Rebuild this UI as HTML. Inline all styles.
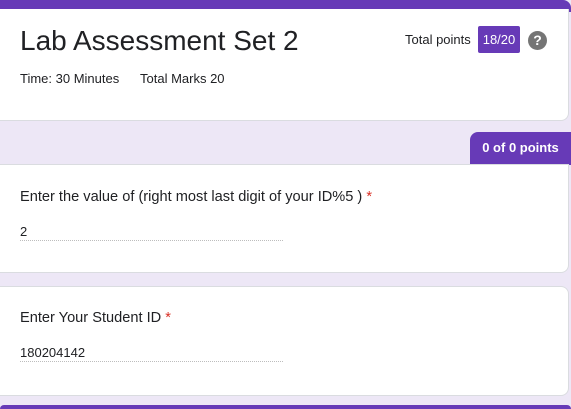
<!DOCTYPE html>
<html><head><style>
body{margin:0;width:571px;height:409px;background:#ede7f6;font-family:"Liberation Sans",sans-serif;position:relative;overflow:hidden;color:#202124}
.card{position:absolute;left:0;width:569px;background:#fff;border:1px solid #dadce0;border-left:none;border-radius:0 8px 8px 0;box-sizing:border-box}
.abs{position:absolute;white-space:nowrap}
.q{font-size:14.6px;left:20px}
.line{position:absolute;left:20px;width:263px;border-top:1px dotted #bdbdbd}
.star{color:#d93025}
</style></head><body>
<div class="abs" style="left:0;top:0;width:571px;height:12px;background:#673ab7;border-radius:0 8px 0 0"></div>
<div class="card" style="top:9px;height:112px;border-top:none;border-radius:0 0 8px 0"></div>
<div class="abs" style="left:20px;top:25px;font-size:28px;color:#202124">Lab Assessment Set 2</div>
<div class="abs" style="left:405px;top:32px;font-size:13px">Total points</div>
<div class="abs" style="left:478px;top:26px;width:42px;height:27px;background:#673ab7;color:#fff;font-size:13px;line-height:27px;text-align:center;border-radius:2px">18/20</div>
<div class="abs" style="left:528px;top:31px;width:19px;height:19px;border-radius:50%;background:#757575;color:#fff;font-size:14px;font-weight:bold;line-height:19px;text-align:center">?</div>
<div class="abs" style="left:20px;top:71px;font-size:13px">Time: 30 Minutes</div>
<div class="abs" style="left:140px;top:71px;font-size:13px">Total Marks 20</div>
<div class="abs" style="left:470px;top:132px;width:101px;height:33px;background:#673ab7;color:#fff;font-size:13px;font-weight:bold;line-height:31px;text-align:center;border-radius:8px 0 0 0">0 of 0 points</div>
<div class="card" style="top:164px;height:109px;border-radius:0 0 8px 0"></div>
<div class="abs q" style="top:189px">Enter the value of (right most last digit of your ID%5 ) <span class="star">*</span></div>
<div class="abs" style="left:20px;top:224px;font-size:13px">2</div>
<div class="line" style="top:240px"></div>
<div class="card" style="top:286px;height:110px;border-radius:0 8px 8px 0"></div>
<div class="abs q" style="top:310px">Enter Your Student ID <span class="star">*</span></div>
<div class="abs" style="left:20px;top:345px;font-size:13px">180204142</div>
<div class="line" style="top:361px"></div>
<div class="abs" style="left:0;top:405px;width:571px;height:4px;background:#673ab7;border-radius:8px 8px 0 0"></div>
</body></html>
